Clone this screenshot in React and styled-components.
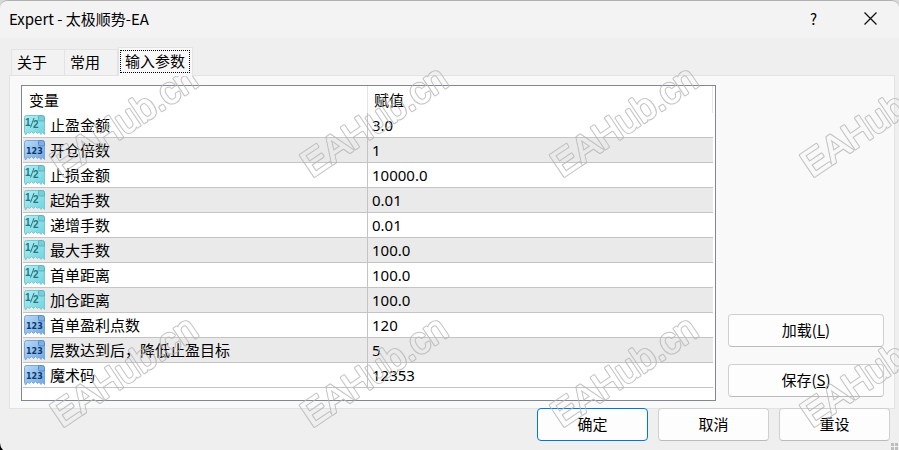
import React, { useState } from 'react';
import styled, { createGlobalStyle, css } from 'styled-components';

const colors = {
  title: '#f3f3f3',
  face: '#efefef',
  panel: '#f9f9f9',
  line: '#c4c4c4',
  frame: '#828790',
  accent: '#0078d4',
};

const GlobalStyle = createGlobalStyle`
  * {
    box-sizing: border-box;
  }

  body {
    margin: 0;
    background: #d8d8d8;
    color: #000;
    font-family: 'Noto Sans CJK SC', sans-serif;
    font-size: 15px;
    line-height: 20px;
  }

  button {
    font: inherit;
    color: inherit;
  }
`;

// Dialog window
const Dialog = styled.main`
  position: relative;
  display: flex;
  flex-direction: column;
  min-height: 100vh;
  overflow: hidden;
  background: ${colors.face};
  border-top: 1px solid #b0b0b0;
  border-radius: 8px 8px 0 0;
`;

const TitleBar = styled.header`
  display: flex;
  align-items: center;
  height: 37px;
  padding: 0 0 2px 9px;
  background: ${colors.title};
`;

const Title = styled.h1`
  flex: 1;
  margin: 0;
  font-size: 15px;
  font-weight: 400;
`;

const CaptionButton = styled.button`
  display: flex;
  align-items: center;
  justify-content: center;
  width: 57px;
  height: 35px;
  padding: 0;
  border: none;
  background: transparent;
`;

// Tabs
const TabList = styled.div`
  display: flex;
  align-items: flex-end;
  height: 37px;
  padding-left: 11px;
`;

const Tab = styled.button`
  height: 26px;
  padding: 0 17px 2px 5px;
  border: 1px solid #e3e3e3;
  border-bottom: none;
  border-left-width: ${(props) => (props.$first ? '1px' : '0')};
  background: #f2f2f2;

  ${(props) =>
    props.$active &&
    css`
      position: relative;
      z-index: 1;
      height: 29px;
      margin-bottom: -1px;
      padding: 0 2px 1px 1px;
      border-left-width: 1px;
      background: ${colors.panel};
    `}
`;

const TabLabel = styled.span`
  display: block;
  padding: 0 4px 2px;
  border: 1px ${(props) => (props.$active ? 'dotted #000' : 'none')};
  line-height: 19px;
`;

const Panel = styled.section`
  display: flex;
  gap: 12px;
  margin: 0 4px 0 9px;
  padding: 9px 10px 7px 11px;
  border: 1px solid #e3e3e3;
  background: ${colors.panel};
`;

// Parameter list
const ListBox = styled.div`
  flex: 1;
  padding: 0 2px 12px 1px;
  border: 1px solid ${colors.frame};
  background: #fff;
`;

const Table = styled.table`
  width: 100%;
  border-collapse: separate;
  border-spacing: 0;
  table-layout: fixed;
`;

const HeadCell = styled.th`
  height: 27px;
  padding: 1px 6px 0;
  border-right: 1px solid #e5e5e5;
  font-weight: 400;
  text-align: left;
`;

const Row = styled.tr`
  background: ${(props) => (props.$shaded ? '#eaeaea' : '#fff')};
`;

const NameCell = styled.td`
  height: 25px;
  padding: 0 1px;
  border-right: 1px solid ${colors.line};
  border-bottom: 1px solid ${colors.line};
`;

const NameContent = styled.div`
  display: flex;
  align-items: center;
  gap: 5px;
`;

const ValueCell = styled.td`
  height: 25px;
  padding: 0 4px;
  border-bottom: 1px solid ${colors.line};
  font-family: 'Noto Sans', 'Noto Sans CJK SC', sans-serif;
`;

// Buttons
const PushButton = styled.button`
  width: ${(props) => (props.$wide ? '156px' : '111px')};
  height: 33px;
  padding: 0 0 2px;
  border: 1px solid ${(props) => (props.$primary ? colors.accent : '#d0d0d0')};
  border-bottom-color: ${(props) => (props.$primary ? colors.accent : '#bababa')};
  border-radius: 4px;
  background: #fdfdfd;
`;

const SideButtons = styled.div`
  display: flex;
  flex-direction: column;
  justify-content: flex-end;
  gap: 17px;
  padding-bottom: 4px;
`;

const Footer = styled.footer`
  display: flex;
  justify-content: flex-end;
  gap: 10px;
  margin-top: -1px;
  padding: 0 9px 9px;
`;

const Grip = styled.svg`
  position: absolute;
  right: 0;
  bottom: 0;
`;

const Corner = styled.svg`
  position: absolute;
  left: 0;
  bottom: 0;
`;

const Watermark = styled.svg`
  position: absolute;
  inset: -1px 0 0;
  width: 100%;
  height: calc(100% + 1px);
  pointer-events: none;
`;

const tabs = ['关于', '常用', '输入参数'];

const params = [
  { name: '止盈金额', value: '3.0', type: 'double' },
  { name: '开仓倍数', value: '1', type: 'int' },
  { name: '止损金额', value: '10000.0', type: 'double' },
  { name: '起始手数', value: '0.01', type: 'double' },
  { name: '递增手数', value: '0.01', type: 'double' },
  { name: '最大手数', value: '100.0', type: 'double' },
  { name: '首单距离', value: '100.0', type: 'double' },
  { name: '加仓距离', value: '100.0', type: 'double' },
  { name: '首单盈利点数', value: '120', type: 'int' },
  { name: '层数达到后，降低止盈目标', value: '5', type: 'int' },
  { name: '魔术码', value: '12353', type: 'int' },
];

// Torn paper icon, cyan for doubles and blue for integers
function TypeIcon({ type }) {
  const isInt = type === 'int';
  const ink = isInt ? '#0d3a6b' : '#1f7785';
  return (
    <svg width="21" height="21" viewBox="0 0 21 21" aria-hidden="true">
      <path
        d="M2.5 .5H15L20.5 5.5V19.5L18.5 17.5L17 19.5L15 17L13.5 18.5L11.5 16.5L9.5 18.5L7.5 16.5L5.5 18.5L3.5 17L1.5 20L.5 17V2.5Q.5 .5 2.5 .5Z"
        fill={isInt ? 'url(#intPaper)' : 'url(#doublePaper)'}
        stroke={isInt ? '#7ba6d8' : '#78c6d0'}
      />
      <path
        d="M14.5 1V4.5Q14.5 6 16 6H20.5V2.5Q20.5 .5 18.5 .5H15Z"
        fill={isInt ? '#7fb0e2' : '#76cfd9'}
        stroke={isInt ? '#568bc6' : '#5cb2be'}
      />
      {isInt ? (
        <text x="2" y="14" fontFamily="DejaVu Sans" fontWeight="700" fontSize="8" fill={ink}>
          123
        </text>
      ) : (
        <g fontFamily="Liberation Sans" fontWeight="700" fontSize="10" fill={ink}>
          <text x="1" y="11">1</text>
          <text x="9" y="13">2</text>
          <path d="M10 3L6.5 12.5" stroke={ink} fill="none" />
        </g>
      )}
    </svg>
  );
}

function WatermarkLayer() {
  const text = {
    x: 0,
    y: 0,
    transform: 'translate(62 178) rotate(-34)',
    fontFamily: 'Liberation Sans',
    fontSize: 37,
    strokeLinejoin: 'round',
  };
  return (
    <Watermark aria-hidden="true">
      <defs>
        <linearGradient id="intPaper" x1="0" y1="0" x2="1" y2="1">
          <stop offset="0" stopColor="#b9dafa" />
          <stop offset="1" stopColor="#6ea6e0" />
        </linearGradient>
        <linearGradient id="doublePaper" x1="0" y1="0" x2="1" y2="1">
          <stop offset="0" stopColor="#b4eef2" />
          <stop offset="1" stopColor="#6fd3de" />
        </linearGradient>
        <mask id="outline" maskUnits="userSpaceOnUse" x="0" y="0" width="250" height="250">
          <text {...text} fill="#fff" stroke="#fff" strokeWidth="3">EAHub.cn</text>
          <text {...text} fill="#000" stroke="#000" strokeWidth="1">EAHub.cn</text>
        </mask>
        <pattern id="mark" width="250" height="250" patternUnits="userSpaceOnUse">
          <rect width="250" height="250" fill="#b4b4b4" fillOpacity="0.8" mask="url(#outline)" />
        </pattern>
      </defs>
      <rect width="100%" height="100%" fill="url(#mark)" />
    </Watermark>
  );
}

function App() {
  const [activeTab, setActiveTab] = useState(2);

  return (
    <>
      <GlobalStyle />
      <Dialog>
        <TitleBar>
          <Title>Expert - 太极顺势-EA</Title>
          <CaptionButton>?</CaptionButton>
          <CaptionButton aria-label="Close">
            <svg width="13" height="13" viewBox="0 0 13 13">
              <path d="M.5 .5L12.5 12.5M12.5 .5L.5 12.5" stroke="#111" strokeWidth="1.3" />
            </svg>
          </CaptionButton>
        </TitleBar>
        <TabList role="tablist">
          {tabs.map((tab, index) => (
            <Tab
              key={tab}
              role="tab"
              aria-selected={index === activeTab}
              $first={index === 0}
              $active={index === activeTab}
              onClick={() => setActiveTab(index)}
            >
              {index === activeTab ? <TabLabel $active>{tab}</TabLabel> : tab}
            </Tab>
          ))}
        </TabList>
        <Panel>
          <ListBox>
            <Table>
              <thead>
                <tr>
                  <HeadCell>变量</HeadCell>
                  <HeadCell>赋值</HeadCell>
                </tr>
              </thead>
              <tbody>
                {params.map((param, index) => (
                  <Row key={param.name} $shaded={index % 2 === 1}>
                    <NameCell>
                      <NameContent>
                        <TypeIcon type={param.type} />
                        {param.name}
                      </NameContent>
                    </NameCell>
                    <ValueCell>{param.value}</ValueCell>
                  </Row>
                ))}
              </tbody>
            </Table>
          </ListBox>
          <SideButtons>
            <PushButton $wide>加载(<u>L</u>)</PushButton>
            <PushButton $wide>保存(<u>S</u>)</PushButton>
          </SideButtons>
        </Panel>
        <Footer>
          <PushButton $primary>确定</PushButton>
          <PushButton>取消</PushButton>
          <PushButton>重设</PushButton>
        </Footer>
        <Corner width="3" height="7" viewBox="0 0 3 7">
          <path d="M0 0Q0 4 3 7H0Z" fill="#000" />
        </Corner>
        <Grip width="8" height="7" viewBox="0 0 8 7">
          <path d="M0 0H3V3H0ZM4 0H7V3H4ZM0 4H3V7H0ZM4 4H7V7H4Z" fill="#bdbdbd" />
        </Grip>
        <WatermarkLayer />
      </Dialog>
    </>
  );
}

export default App;
